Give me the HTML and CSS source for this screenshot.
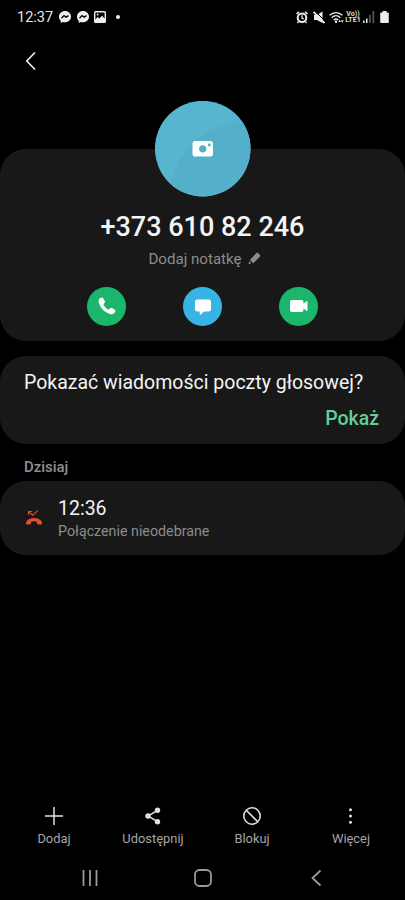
FILE: index.html
```html
<!DOCTYPE html>
<html lang="pl">
<head>
<meta charset="utf-8">
<meta name="viewport" content="width=device-width, initial-scale=1">
<title>Kontakt</title>
<link rel="stylesheet" href="styles.css">
</head>
<body>
<div class="screen">
  <header class="status">
    <div class="status-left">
      <span class="clock">12:37</span>
      <svg width="12" height="12" viewBox="0 0 12 12"><path fill="#eee" d="M6 0C2.600 0 0 2.500 0 5.700c0 1.700.7 3.200 1.800 4.200V12l2-1.100c.7.2 1.400.3 2.200.3 3.400 0 6-2.400 6-5.500S9.400 0 6 0z"/><path d="M2.500 7.200 5 4.600l2 1.500 2.500-1.500" fill="none" stroke="#000" stroke-width="1.300"/></svg>
      <svg width="12" height="12" viewBox="0 0 12 12"><path fill="#eee" d="M6 0C2.600 0 0 2.500 0 5.700c0 1.700.7 3.200 1.800 4.200V12l2-1.100c.7.2 1.400.3 2.200.3 3.400 0 6-2.400 6-5.500S9.400 0 6 0z"/><path d="M2.500 7.200 5 4.600l2 1.500 2.500-1.500" fill="none" stroke="#000" stroke-width="1.300"/></svg>
      <svg width="12" height="12" viewBox="0 0 12 12"><rect x=".7" y=".7" width="10.600" height="10.600" rx=".8" fill="none" stroke="#eee" stroke-width="1.400"/><path fill="#eee" d="M1 9l2.500-3 2 1.600L8 4.800 11 8v3H1z"/><circle cx="3.700" cy="3.500" r=".9" fill="#eee"/></svg>
      <i class="dot"></i>
    </div>
    <div class="status-right">
      <svg width="12" height="13" viewBox="0 0 12 13"><path d="M.6 3 3 .8M11.400 3 9 .8" stroke="#eee" stroke-width="1.600"/><circle cx="6" cy="6.800" r="4.300" fill="none" stroke="#eee" stroke-width="2"/><path d="M6 4.200V7l1.800 1M2.500 10.500l-1 1.600M9.500 10.500l1 1.600" fill="none" stroke="#eee" stroke-width="1.300"/></svg>
      <svg class="mute" width="12" height="13" viewBox="0 0 12 13"><path fill="#eee" d="M1 4h3L9.500.5v11.500L4 9H1z"/><path d="M1.800-.2 12.800 10.800" stroke="#000" stroke-width="1"/><path d="M.6 1 11.500 12" stroke="#eee" stroke-width="1.800"/></svg>
      <svg class="wifi" width="16" height="13" viewBox="0 0 16 13"><g fill="none" stroke="#eee" stroke-width="1.300"><path d="M.7 4.300c3.700-3.600 8.900-3.600 12.600 0"/><path d="M2.700 6.700c2.600-2.500 6-2.500 8.600 0"/><path d="M4.700 9c1.500-1.300 3.100-1.300 4.600 0"/></g><circle cx="7" cy="10.800" r="1.200" fill="#eee"/><path fill="#eee" d="m9.400 11 1.300-2.400L12 11zM12 9.300h2.600l-1.300 2.400z"/></svg>
      <span class="lte"><b>Vo))</b><b>LTE1</b></span>
      <svg class="signal" width="12" height="12" viewBox="0 0 12 12"><path fill="#eee" d="M0 9.500h1.500V12H0zM3 7.500h1.500V12H3z"/><path fill="#555" d="M6 4h1.700v8H6zM9.500 0h1.700v12H9.500z"/></svg>
      <svg width="9" height="13" viewBox="0 0 9 13"><path fill="#eee" d="M2.500 0h4v1.500H8q.8 0 .8.8v9q0 .8-.8.8H1q-.8 0-.8-.8v-9q0-.8.8-.8h1.500z"/></svg>
    </div>
  </header>
  <div class="toolbar">
    <svg width="12" height="20" viewBox="0 0 12 20"><path d="M10 1.500 1.800 10 10 18.500" fill="none" stroke="#f2f2f2" stroke-width="1.600"/></svg>
  </div>
  <main>
    <section class="card profile">
      <div class="avatar">
        <svg width="96" height="96" viewBox="0 0 96 96"><defs><clipPath id="disc"><circle cx="47.700" cy="47.600" r="47.800"/></clipPath></defs><g clip-path="url(#disc)"><rect width="96" height="96" fill="#58b5d0"/><path fill="#54afca" d="M14 96C17 54 45 23 96 18v78z"/></g><rect x="37.500" y="40" width="20.500" height="15.500" rx="2.800" fill="#fff"/><circle cx="47.700" cy="47.800" r="3.600" fill="#53aec9"/><circle cx="54.300" cy="44" r="1.400" fill="#53aec9"/></svg>
      </div>
      <h1>+373 610 82 246</h1>
      <div class="note"><span>Dodaj notatkę</span><svg width="13" height="13" viewBox="0 0 13 13"><path fill="#8c8c8c" d="M.3 12.200 1.300 9.200 3.300 11.200z M2 8 8.400 1q.8-.8 1.600 0l2 2q.8.8 0 1.600L5.200 11.200z"/></svg></div>
      <div class="calls">
        <button class="green" aria-label="Zadzwoń"><svg width="18" height="18" viewBox="0 0 18 18"><path fill="#fff" d="M1 2.200Q2.500.3 4 .5q.8 0 1.300.9l1.500 2.700q.5 1-.3 1.900l-.9.9q-.3.5 0 1 1.700 2.900 4.500 4.500.6.300 1-.1l1-1q.8-.8 1.800-.2l2.600 1.500q1.200.8.8 1.800-.6 1.700-2.300 2.500-1.500.7-3.400 0Q3.600 13.900.9 6.200.2 3.700 1 2.200z"/></svg></button>
        <button class="blue" aria-label="Wiadomość"><svg width="18" height="18" viewBox="0 0 18 18"><path fill="#fff" d="M3.300 2.500h11.400Q17 2.500 17 4.800v7.400q0 2.300-2.300 2.300H10l-3.600 3.300q-.7.500-.7-.4V14.500H3.300Q1 14.500 1 12.200V4.800Q1 2.500 3.300 2.500z"/></svg></button>
        <button class="green" aria-label="Wideo"><svg width="20" height="14" viewBox="0 0 20 14"><rect x="1" y="1" width="13.500" height="12" rx="2" fill="#fff"/><path fill="#fff" d="m13.500 5.200 4-2.900q1-.5 1 .5v8.400q0 1-1 .5l-4-2.900z"/></svg></button>
      </div>
    </section>
    <section class="card voicemail"><p>Pokazać wiadomości poczty głosowej?</p><button>Pokaż</button></section>
    <h2>Dzisiaj</h2>
    <section class="card history">
      <svg width="18" height="16" viewBox="0 0 18 16"><path d="M3.500 4.700V1.500h3.700M3.700 1.700l3.800 3.500L13 .6" fill="none" stroke="#d94a2c" stroke-width="1.200"/><path fill="#e84e2e" d="M1.300 14.200Q.4 13.300 1.400 11.500 3.500 8 9 7.900q5.500.1 7.600 3.600 1 1.800.1 2.700-.4.4-1 .3l-3-.3q-.8-.1-.8-1v-1.500Q9 10.800 6.100 11.700v1.500q0 .9-.8 1l-3 .3q-.6.100-1-.3z"/></svg>
      <div><div class="time">12:36</div><div class="kind">Połączenie nieodebrane</div></div>
    </section>
  </main>
  <footer class="actions">
    <div><svg width="20" height="20" viewBox="0 0 20 20"><path d="M10 1v18M1 10h18" stroke="#e0e0e0" stroke-width="1.500"/></svg><span>Dodaj</span></div>
    <div><svg width="20" height="20" viewBox="0 0 20 20"><path d="M14.500 4.300 5 10l9.500 5.700" fill="none" stroke="#e0e0e0" stroke-width="1.500"/><g fill="#e0e0e0"><circle cx="14.500" cy="4.300" r="2.700"/><circle cx="5" cy="10" r="2.700"/><circle cx="14.500" cy="15.700" r="2.700"/></g></svg><span>Udostępnij</span></div>
    <div><svg width="20" height="20" viewBox="0 0 20 20"><g fill="none" stroke="#e0e0e0" stroke-width="1.600"><circle cx="10" cy="10" r="8.200"/><path d="m4.200 4.200 11.600 11.600"/></g></svg><span>Blokuj</span></div>
    <div><svg width="20" height="20" viewBox="0 0 20 20"><g fill="#e0e0e0"><circle cx="9.500" cy="3.800" r="1.500"/><circle cx="9.500" cy="10" r="1.500"/><circle cx="9.500" cy="16.200" r="1.500"/></g></svg><span>Więcej</span></div>
  </footer>
  <nav>
    <svg width="18" height="18" viewBox="0 0 18 18"><path d="M2.500 1v16M9 1v16M15.500 1v16" stroke="#999" stroke-width="1.800"/></svg>
    <svg width="18" height="18" viewBox="0 0 18 18"><rect x="1" y="1" width="16" height="16" rx="4.500" fill="none" stroke="#999" stroke-width="1.800"/></svg>
    <svg width="18" height="18" viewBox="0 0 18 18"><path d="M13.500 1.500 5.500 9l8 7.500" fill="none" stroke="#999" stroke-width="1.800"/></svg>
  </nav>
</div>
</body>
</html>
```
FILE: styles.css
```css
* { box-sizing: border-box; }
body { margin: 0; background: #000; color: #f4f4f4; font-family: Roboto, sans-serif; }
svg { display: block; flex: none; }
h1, h2, p { margin: 0; }
button { border: 0; padding: 0; background: none; font-family: inherit; }
.screen { width: 405px; height: 900px; display: flex; flex-direction: column; overflow: hidden; }
.status { height: 34px; display: flex; justify-content: space-between; padding: 0 16px 0 17px; }
.status-left, .status-right { display: flex; align-items: center; }
.status-left { gap: 5.5px; }
.clock { font-size: 14.5px; line-height: 35px; color: #e6e6e6; width: 36.5px; white-space: nowrap; }
.dot { width: 4px; height: 4px; border-radius: 50%; background: #eee; margin-left: 4px; }
.mute { margin-left: 5px; }
.wifi { margin-left: 4px; }
.lte { display: flex; flex-direction: column; align-items: center; width: 16px; font-size: 7px; line-height: 6.5px; color: #ddd; }
.lte b { font-weight: 700; }
.signal { margin: 0 5px 0 2px; }
.toolbar { height: 114.5px; padding: 17px 25px; }
.card { background: #181818; border-radius: 26px; }
.profile { height: 192px; display: flex; flex-direction: column; align-items: center; }
.avatar { margin-top: -48px; height: 96px; }
h1 { margin-top: 14px; font-size: 27px; line-height: 32px; font-weight: 500; white-space: nowrap; }
.note { display: flex; align-items: center; gap: 6px; margin: 7px 0 0 4px; height: 18px; font-size: 15.1px; color: #8c8c8c; }
.calls { display: flex; gap: 57px; margin-top: 19px; }
.calls button { width: 39.5px; height: 39.5px; margin: 0 -.25px; border-radius: 50%; display: flex; align-items: center; justify-content: center; }
.green { background: #1bb56b; }
.blue { background: #37b4e3; }
.voicemail { margin-top: 15px; height: 88.5px; padding: 15px 26px 0 24px; display: flex; flex-direction: column; }
.voicemail p { font-size: 19.5px; line-height: 24px; white-space: nowrap; }
.voicemail button { align-self: flex-end; margin-top: 12px; font-size: 19.5px; line-height: 24px; font-weight: 500; color: #62cf98; }
h2 { height: 37px; padding: 13px 24px 0; font-size: 14.9px; line-height: 20px; font-weight: 500; color: #8f8f8f; }
.history { height: 73.5px; display: flex; align-items: flex-start; padding: 16px 25px 0; gap: 15px; }
.history svg { margin-top: 13px; }
.time { font-size: 19.5px; line-height: 24px; }
.kind { font-size: 14.25px; line-height: 20px; color: #8c8c8c; white-space: nowrap; }
.actions { margin-top: auto; height: 49px; padding: 0 4.5px; display: grid; grid-template-columns: repeat(4, 1fr); }
.actions div { display: flex; flex-direction: column; align-items: center; font-size: 12.9px; line-height: 18px; color: #a5a5a5; gap: 4px; }
nav { height: 45px; display: flex; justify-content: space-between; align-items: center; padding: 0 80px 0 80.5px; }
```
